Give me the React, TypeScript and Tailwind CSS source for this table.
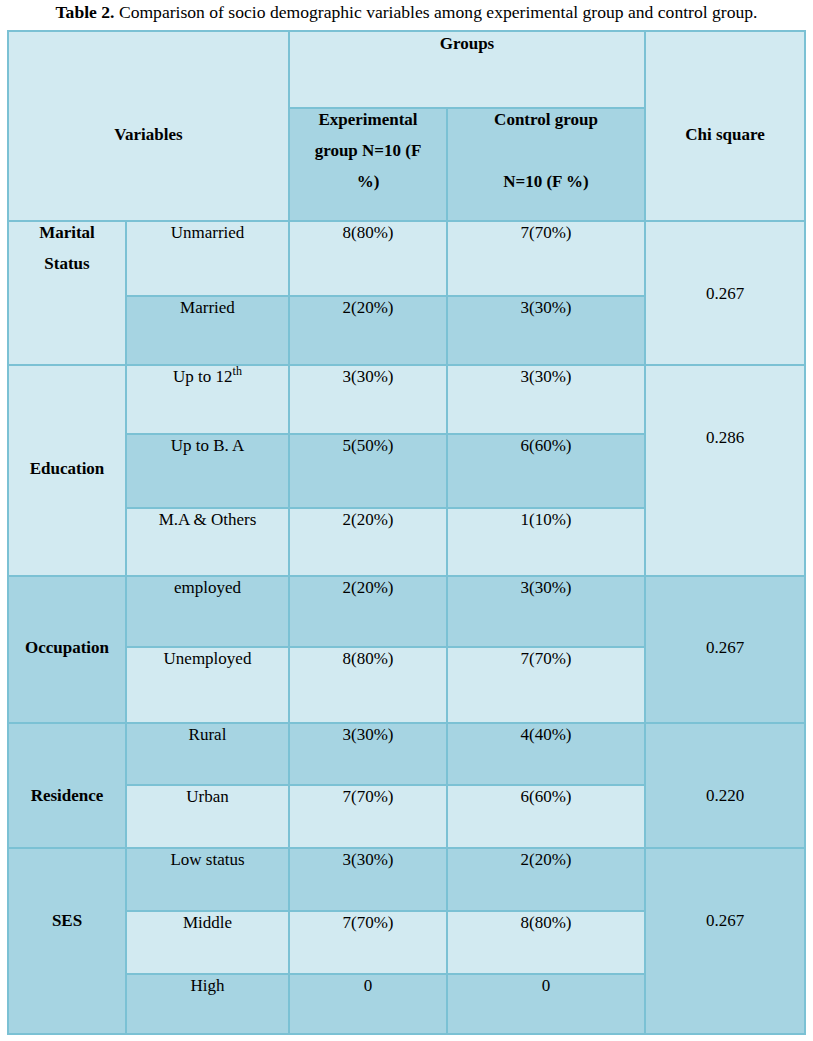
const light = "bg-[#d2eaf1]";
const dark = "bg-[#a6d4e2]";

type Row = {
  pos: string;
  label: React.ReactNode;
  exp: string;
  ctl: string;
  bg: string;
};

type Group = {
  pos: string;
  name: string[];
  chi: string;
  bg: string;
  namePt: string;
  chiPt: string;
};

const groups: Group[] = [
  { pos: "row-start-3 row-span-2", name: ["Marital", "Status"], chi: "0.267", bg: light, namePt: "pt-[1px]", chiPt: "pt-[62px]" },
  { pos: "row-start-5 row-span-3", name: ["Education"], chi: "0.286", bg: light, namePt: "pt-[93px]", chiPt: "pt-[62px]" },
  { pos: "row-start-8 row-span-2", name: ["Occupation"], chi: "0.267", bg: dark, namePt: "pt-[61px]", chiPt: "pt-[61px]" },
  { pos: "row-start-10 row-span-2", name: ["Residence"], chi: "0.220", bg: dark, namePt: "pt-[62px]", chiPt: "pt-[62px]" },
  { pos: "row-start-12 row-span-3", name: ["SES"], chi: "0.267", bg: dark, namePt: "pt-[62px]", chiPt: "pt-[62px]" },
];

const rows: Row[] = [
  { pos: "row-start-3", label: "Unmarried", exp: "8(80%)", ctl: "7(70%)", bg: light },
  { pos: "row-start-4", label: "Married", exp: "2(20%)", ctl: "3(30%)", bg: dark },
  {
    pos: "row-start-5",
    label: (
      <>
        Up to 12<sup className="text-[12px] relative -top-[7px]">th</sup>
      </>
    ),
    exp: "3(30%)",
    ctl: "3(30%)",
    bg: light,
  },
  { pos: "row-start-6", label: "Up to B. A", exp: "5(50%)", ctl: "6(60%)", bg: dark },
  { pos: "row-start-7", label: "M.A & Others", exp: "2(20%)", ctl: "1(10%)", bg: light },
  { pos: "row-start-8", label: "employed", exp: "2(20%)", ctl: "3(30%)", bg: dark },
  { pos: "row-start-9", label: "Unemployed", exp: "8(80%)", ctl: "7(70%)", bg: light },
  { pos: "row-start-10", label: "Rural", exp: "3(30%)", ctl: "4(40%)", bg: dark },
  { pos: "row-start-11", label: "Urban", exp: "7(70%)", ctl: "6(60%)", bg: light },
  { pos: "row-start-12", label: "Low status", exp: "3(30%)", ctl: "2(20%)", bg: dark },
  { pos: "row-start-13", label: "Middle", exp: "7(70%)", ctl: "8(80%)", bg: light },
  { pos: "row-start-14", label: "High", exp: "0", ctl: "0", bg: dark },
];

export default function App() {
  return (
    <div className="bg-white min-h-[1041px] w-[813px] font-[family-name:'Liberation_Serif','Times_New_Roman',serif] text-black">
      <div className="h-[24px] leading-[24px] mb-[6px] text-center text-[17.6px]">
        <b>Table 2.</b> Comparison of socio demographic variables among
        experimental group and control group.
      </div>

      <div className="ml-[7px] w-[799px] grid grid-cols-[116px_161px_156px_196px_158px] grid-rows-[75px_111px_73px_67px_67px_72px_66px_69px_74px_60px_61px_61px_61px_58px] gap-[2px] p-[2px] bg-[#7bc1d4] text-[17px] leading-[20px] text-center">
        {/* header */}
        <div className={`col-start-1 col-span-2 row-start-1 row-span-2 ${light} pt-[93px] font-bold`}>
          Variables
        </div>
        <div className={`col-start-3 col-span-2 row-start-1 ${light} pt-[2px] font-bold`}>
          Groups
        </div>
        <div className={`col-start-5 row-start-1 row-span-2 ${light} pt-[93px] font-bold`}>
          Chi square
        </div>
        <div className={`col-start-3 row-start-2 ${dark} pt-[1px] font-bold flex flex-col gap-[11px]`}>
          <span>Experimental</span>
          <span>group N=10 (F</span>
          <span>%)</span>
        </div>
        <div className={`col-start-4 row-start-2 ${dark} pt-[1px] font-bold flex flex-col gap-[11px]`}>
          <span>Control group</span>
          <span>&nbsp;</span>
          <span>N=10 (F %)</span>
        </div>

        {groups.map((g) => (
          <div key={g.name.join()} className="contents">
            <div className={`col-start-1 ${g.pos} ${g.bg} ${g.namePt} font-bold flex flex-col gap-[11px]`}>
              {g.name.map((n) => (
                <span key={n}>{n}</span>
              ))}
            </div>
            <div className={`col-start-5 ${g.pos} ${g.bg} ${g.chiPt}`}>{g.chi}</div>
          </div>
        ))}

        {rows.map((r, i) => (
          <div key={i} className="contents">
            <div className={`col-start-2 ${r.pos} ${r.bg} pt-[1px]`}>{r.label}</div>
            <div className={`col-start-3 ${r.pos} ${r.bg} pt-[1px]`}>{r.exp}</div>
            <div className={`col-start-4 ${r.pos} ${r.bg} pt-[1px]`}>{r.ctl}</div>
          </div>
        ))}
      </div>
    </div>
  );
}
